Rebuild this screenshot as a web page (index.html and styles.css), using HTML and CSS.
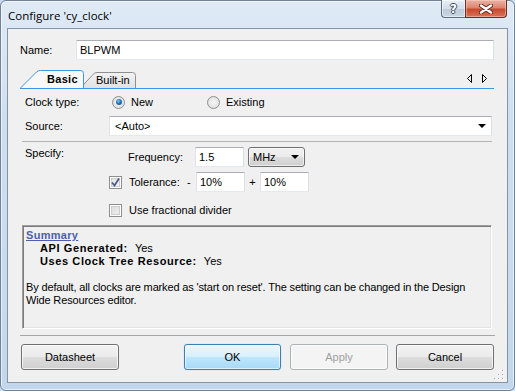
FILE: index.html
```html
<!DOCTYPE html>
<html lang="en">
<head>
    <meta charset="UTF-8">
    <title>Configure 'cy_clock'</title>
    <link rel="stylesheet" href="styles.css">
</head>
<body>

    <div class="window">
        <div class="titlebar">
            <span class="title">Configure 'cy_clock'</span>
            <div class="caption-buttons">
                <div class="cap-btn help"><span>?</span></div>
                <div class="cap-btn close">
                    <svg width="14" height="10" viewBox="0 0 14 10">
                        <path d="M2 1.5 L12 8.5 M12 1.5 L2 8.5" stroke="#5b2a22" stroke-width="4.2" stroke-linecap="round"/>
                        <path d="M2 1.5 L12 8.5 M12 1.5 L2 8.5" stroke="#fff" stroke-width="2.4" stroke-linecap="round"/>
                    </svg>
                </div>
            </div>
        </div>

        <div class="client">
            <div class="name-row">
                <span class="name-label">Name:</span>
                <div class="textbox grow">BLPWM</div>
            </div>

            <div class="tabs">
                <div class="tab active">
                    <svg class="tab-shape" width="64" height="18" viewBox="0 0 64 18">
                        <path d="M0.5 18 L16.5 2 Q18 0.5 20.5 0.5 L60.5 0.5 Q63.5 0.5 63.5 3.5 L63.5 18" fill="#f8f8f8" stroke="#3d95e6"/>
                    </svg>
                    <span class="tab-text">Basic</span>
                </div>
                <div class="tab">
                    <svg class="tab-shape" width="56" height="16" viewBox="0 0 56 16">
                        <defs>
                            <linearGradient id="tabg" x1="0" y1="0" x2="0" y2="1">
                                <stop offset="0" stop-color="#f3f3f3"/>
                                <stop offset="1" stop-color="#e1e1e1"/>
                            </linearGradient>
                        </defs>
                        <path d="M0.5 16 L13 2.5 Q14.5 0.5 17 0.5 L52.5 0.5 Q55.5 0.5 55.5 3.5 L55.5 16" fill="url(#tabg)" stroke="#8e8e8e"/>
                    </svg>
                    <span class="tab-text">Built-in</span>
                </div>
                <svg class="tab-scroll" width="20" height="9" viewBox="0 0 20 9">
                    <path d="M4.5 0.5 L0.5 4.5 L4.5 8.5 Z M15.5 0.5 L19.5 4.5 L15.5 8.5 Z" fill="none" stroke="#000"/>
                </svg>
            </div>

            <div class="row">
                <span class="row-label">Clock type:</span>
                <span class="radio on"></span>
                <span class="opt first">New</span>
                <span class="radio"></span>
                <span class="opt">Existing</span>
            </div>

            <div class="row">
                <span class="row-label short">Source:</span>
                <div class="combo grow">
                    <span>&lt;Auto&gt;</span>
                    <span class="arrow"></span>
                </div>
            </div>

            <div class="sep"></div>

            <div class="specify">
                <span class="spec-label">Specify:</span>
                <div class="spec-body">
                    <div class="spec-row freq">
                        <span class="freq-label">Frequency:</span>
                        <div class="textbox freq-input">1.5</div>
                        <div class="dropdown">
                            <span>MHz</span>
                            <span class="arrow"></span>
                        </div>
                    </div>
                    <div class="spec-row">
                        <span class="check on">
                            <svg width="11" height="11" viewBox="0 0 11 11">
                                <path d="M2 5.5 L4.5 8.5 L9 1.5" fill="none" stroke="#4a5c8f" stroke-width="1.8"/>
                            </svg>
                        </span>
                        <span class="tol-label">Tolerance:</span>
                        <span class="sign">-</span>
                        <div class="textbox tol-input">10%</div>
                        <span class="sign plus">+</span>
                        <div class="textbox tol-input">10%</div>
                    </div>
                    <div class="spec-row frac">
                        <span class="check"></span>
                        <span class="tol-label">Use fractional divider</span>
                    </div>
                </div>
            </div>

            <div class="summary">
                <div class="sum-title">Summary</div>
                <div class="sum-item"><b>API Generated:</b><span class="val">Yes</span></div>
                <div class="sum-item"><b>Uses Clock Tree Resource:</b><span class="val">Yes</span></div>
                <div class="sum-note">By default, all clocks are marked as 'start on reset'. The setting can be changed in the Design<br>Wide Resources editor.</div>
            </div>

            <div class="sep bottom"></div>

            <div class="buttons">
                <button class="btn">Datasheet</button>
                <button class="btn default">OK</button>
                <button class="btn disabled">Apply</button>
                <button class="btn">Cancel</button>
            </div>

            <svg class="grip" width="10" height="10" viewBox="0 0 10 10">
                <g fill="#fff">
                    <rect x="9" y="1" width="1" height="1"/>
                    <rect x="9" y="5" width="1" height="1"/>
                    <rect x="5" y="5" width="1" height="1"/>
                    <rect x="9" y="9" width="1" height="1"/>
                    <rect x="5" y="9" width="1" height="1"/>
                    <rect x="1" y="9" width="1" height="1"/>
                </g>
                <g fill="#a3acb6">
                    <rect x="8" y="0" width="1" height="1"/>
                    <rect x="8" y="4" width="1" height="1"/>
                    <rect x="4" y="4" width="1" height="1"/>
                    <rect x="8" y="8" width="1" height="1"/>
                    <rect x="4" y="8" width="1" height="1"/>
                    <rect x="0" y="8" width="1" height="1"/>
                </g>
            </svg>
        </div>
    </div>

</body>
</html>
```

FILE: styles.css
```css
* {
    box-sizing: border-box;
}
body {
    margin: 0;
    width: 515px;
    height: 391px;
    background-color: #c9dbee;
    color: #000;
    font-family: "Liberation Sans", Arial, sans-serif;
    font-size: 11px;
}
.window {
    width: 515px;
    height: 391px;
    display: flex;
    flex-direction: column;
    padding: 0 6px 7px 6px;
    border: 1px solid #6f8299;
    border-radius: 6px;
    background: linear-gradient(180deg, #dfeaf6 0%, #cfdff0 30%, #c3d7ec 100%);
    box-shadow: inset 0 0 0 1px rgba(255, 255, 255, 0.6);
}
.titlebar {
    height: 27px;
    display: flex;
    align-items: center;
}
.title {
    padding: 1px 0 0 1px;
    font-family: "Open Sans", "Liberation Sans", sans-serif;
    font-size: 11.5px;
    color: #000;
}
.caption-buttons {
    display: flex;
    align-self: flex-start;
    margin: -1px 1px 0 auto;
}
.cap-btn {
    height: 18px;
    display: flex;
    align-items: center;
    justify-content: center;
    border: 1px solid #5e6d7e;
    border-top: none;
}
.help {
    width: 24px;
    border-right: none;
    border-radius: 0 0 0 4px;
    background: linear-gradient(180deg, #e7eef6 0%, #d3dee9 50%, #bccada 51%, #c9d6e3 100%);
    box-shadow: inset 0 0 0 1px rgba(255, 255, 255, 0.5);
}
.help span {
    font-family: "DejaVu Sans", sans-serif;
    font-weight: bold;
    font-size: 12px;
    color: #fff;
    text-shadow: 1px 0 0 #3f4c5c, -1px 0 0 #3f4c5c, 0 1px 0 #3f4c5c, 0 -1px 0 #3f4c5c;
}
.close {
    width: 42px;
    border-radius: 0 0 4px 0;
    border-color: #6b2c20;
    background: linear-gradient(180deg, #ebb3a3 0%, #dc8670 45%, #c8492d 55%, #d8735a 100%);
    box-shadow: inset 0 0 0 1px rgba(255, 220, 210, 0.45);
}
.client {
    flex: 1;
    position: relative;
    display: flex;
    flex-direction: column;
    padding-bottom: 12px;
    background-color: #f0f0f0;
    border: 1px solid #8593a3;
}
.grow {
    flex: 1;
}
.name-row {
    display: flex;
    align-items: center;
    margin: 11px 13px 0 12px;
}
.name-label {
    width: 56px;
}
.textbox {
    height: 20px;
    line-height: 18px;
    padding: 0 3px;
    background-color: #fff;
    border: 1px solid;
    border-color: #abadb3 #dbdfe6 #e3e9ef #e2e3ea;
}
.tabs {
    height: 19px;
    display: flex;
    align-items: flex-end;
    margin: 10px 13px 0 12px;
    border-bottom: 1px solid #3d95e6;
}
.tab {
    position: relative;
    width: 56px;
    height: 16px;
    margin-left: -4px;
    line-height: 16px;
    padding-left: 16px;
}
.tab.active {
    z-index: 2;
    width: 64px;
    height: 18px;
    margin-left: 0;
    line-height: 19px;
    padding-left: 27px;
    font-weight: bold;
    letter-spacing: 0.3px;
}
.tab-shape {
    position: absolute;
    left: 0;
    top: 0;
}
.tab-text {
    position: relative;
}
.tab-scroll {
    margin: 0 7px 5px auto;
}
.row {
    height: 20px;
    display: flex;
    align-items: center;
    margin: 3px 15px 0 17px;
}
.row + .row {
    margin-top: 4px;
}
.row-label {
    width: 87px;
}
.row-label.short {
    width: 84px;
}
.radio {
    width: 13px;
    height: 13px;
    display: grid;
    place-items: center;
    border: 1px solid #8e8f8f;
    border-radius: 50%;
    background: radial-gradient(circle at 50% 50%, #f6f6f6 0%, #e6e6e6 60%, #d2d2d2 100%);
}
.radio.on::after {
    content: "";
    width: 6px;
    height: 6px;
    border-radius: 50%;
    background: radial-gradient(circle at 40% 35%, #7cc8f2 0%, #1f6fb8 50%, #0b3a6e 100%);
}
.opt {
    margin-left: 6px;
}
.opt.first {
    width: 76px;
}
.combo {
    height: 20px;
    display: flex;
    align-items: center;
    justify-content: space-between;
    padding: 0 5px 0 5px;
    background-color: #fff;
    border: 1px solid;
    border-color: #abadb3 #dbdfe6 #e3e9ef #e2e3ea;
}
.arrow {
    width: 0;
    height: 0;
    border-left: 4px solid transparent;
    border-right: 4px solid transparent;
    border-top: 4px solid #000;
}
.sep {
    height: 1px;
    margin: 5px 15px 0 14px;
    background-color: #b4b4b4;
}
.sep.bottom {
    margin: 6px 12px 0 12px;
    background-color: #a6a6a6;
}
.specify {
    display: flex;
    margin-left: 17px;
}
.spec-label {
    width: 84px;
    padding-top: 5px;
    line-height: 13px;
}
.spec-body {
    display: flex;
    flex-direction: column;
    padding-top: 5px;
}
.spec-row {
    height: 20px;
    display: flex;
    align-items: center;
}
.spec-row + .spec-row {
    margin-top: 5px;
}
.spec-row.frac {
    margin-top: 8px;
}
.spec-row.freq {
    padding-left: 19px;
}
.freq-label {
    width: 67px;
}
.freq-input {
    width: 49px;
}
.dropdown {
    width: 57px;
    height: 20px;
    margin-left: 4px;
    display: flex;
    align-items: center;
    justify-content: space-between;
    padding: 0 5px 0 4px;
    border: 1px solid #707070;
    border-radius: 3px;
    background: linear-gradient(180deg, #f2f2f2 0%, #ebebeb 50%, #dddddd 51%, #cfcfcf 100%);
    box-shadow: inset 0 0 0 1px rgba(255, 255, 255, 0.6);
}
.check {
    width: 13px;
    height: 13px;
    display: grid;
    place-items: center;
    border: 1px solid #8e8f8f;
    background: linear-gradient(135deg, #d8d8d8 0%, #f4f4f4 100%);
    box-shadow: inset 0 0 0 1px #fff, inset 0 0 0 2px #cdcdcd;
}
.check.on {
    background: linear-gradient(135deg, #e0e0e0 0%, #f8f8f8 100%);
}
.tol-label {
    width: 58px;
    margin-left: 7px;
}
.frac .tol-label {
    width: auto;
}
.sign {
    width: 9px;
}
.sign.plus {
    width: 15px;
    text-align: center;
}
.tol-input {
    width: 49px;
}
.summary {
    flex: 1;
    margin: 5px 15px 0 14px;
    padding: 3px 2px 0 3px;
    line-height: 13px;
    border: 1px solid;
    border-color: #a0a0a0 #fff #fff #a0a0a0;
    box-shadow: inset 1px 1px 0 #7a7a7a, inset -1px -1px 0 #e3e3e3;
}
.sum-title {
    font-weight: bold;
    color: #4d5fab;
    text-decoration: underline;
    letter-spacing: 0.3px;
}
.sum-item {
    padding-left: 14px;
}
.sum-item b {
    letter-spacing: 0.6px;
}
.sum-item .val {
    margin-left: 7px;
}
.sum-note {
    margin-top: 13px;
    letter-spacing: -0.15px;
}
.buttons {
    display: flex;
    margin: 8px 13px 0 13px;
}
.btn {
    width: 98px;
    height: 26px;
    margin-left: 8px;
    padding: 0;
    font-family: "Liberation Sans", Arial, sans-serif;
    font-size: 11px;
    color: #000;
    border: 1px solid #707070;
    border-radius: 3px;
    background: linear-gradient(180deg, #f2f2f2 0%, #ebebeb 50%, #dddddd 51%, #cfcfcf 100%);
    box-shadow: inset 0 0 0 1px rgba(255, 255, 255, 0.7);
}
.btn:first-child {
    margin-left: 0;
}
.btn.default {
    width: 97px;
    margin-left: auto;
    border-color: #3c7fb1;
    background: linear-gradient(180deg, #eaf6fd 0%, #d9f0fc 50%, #bee6fd 51%, #a7d9f5 100%);
    box-shadow: inset 0 0 0 1px rgba(255, 255, 255, 0.6), 0 0 1px #6cc2ef;
}
.btn.disabled {
    margin-left: 9px;
    color: #a0a0a0;
    border-color: #adb2b5;
    background: #f4f4f4;
}
.grip {
    position: absolute;
    right: 3px;
    bottom: 2px;
}
```
